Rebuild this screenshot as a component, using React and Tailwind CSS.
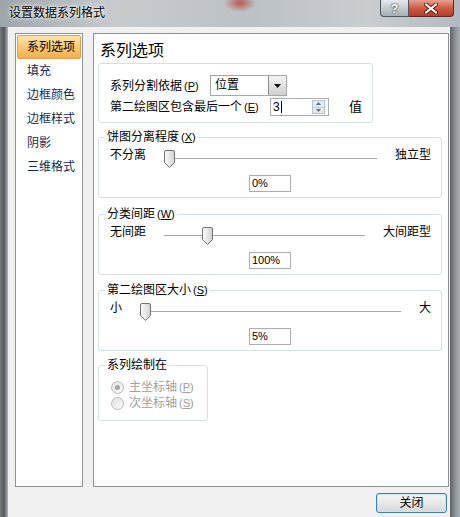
import React from 'react';

const navItems = ['系列选项', '填充', '边框颜色', '边框样式', '阴影', '三维格式'];

function Key({ k }) {
  return (
    <span className="ml-[2px] text-[11px]">
      (<span className="underline underline-offset-1">{k}</span>)
    </span>
  );
}

function Thumb() {
  return (
    <svg width="11" height="18" viewBox="0 0 11 18">
      <defs>
        <linearGradient id="thumbFill" x1="0" x2="1" y1="0" y2="0">
          <stop offset="0" stopColor="#fdfdfd" />
          <stop offset="1" stopColor="#d2d2d2" />
        </linearGradient>
      </defs>
      <path
        d="M2 0.5h7a1.5 1.5 0 0 1 1.5 1.5v10.5l-5 5l-5 -5v-10.5a1.5 1.5 0 0 1 1.5 -1.5z"
        fill="url(#thumbFill)"
        stroke="#727272"
      />
    </svg>
  );
}

function Slider({ pct }) {
  return (
    <div className="relative flex-1 self-stretch">
      <div className="absolute left-0 right-0 top-[13px] h-[2px] border-t border-b border-t-[#a8a8a8] border-b-white" />
      <div className="absolute top-[5px] leading-none" style={{ left: `calc(${pct} * (100% - 11px))` }}>
        <Thumb />
      </div>
    </div>
  );
}

function ValueBox({ value }) {
  return (
    <div className="mx-auto mt-[10px] flex h-[17px] w-[42px] items-center border border-[#abadb3] bg-white pl-[2px] text-[11px] leading-none">
      {value}
    </div>
  );
}

function SliderGroup({ title, left, right, pct, value, className }) {
  return (
    <fieldset className={`rounded-[3px] border border-[#d5dfe5] px-[10px] pb-[5px] ${className}`}>
      <legend className="ml-[-4px] px-[2px] leading-[16px]">{title}</legend>
      <div className="flex h-[20px] items-start gap-[18px] pl-[1px]">
        <span className="leading-[20px]">{left}</span>
        <Slider pct={pct} />
        <span className="leading-[20px]">{right}</span>
      </div>
      <ValueBox value={value} />
    </fieldset>
  );
}

function Radio({ checked, label, k }) {
  return (
    <div className="flex h-[16px] items-center gap-[5px] text-[#a0a0a0]">
      <span className="flex h-[13px] w-[13px] items-center justify-center rounded-full border border-[#bcbcbc] bg-gradient-to-br from-[#e2e2e2] to-[#fafafa]">
        {checked && <span className="h-[5px] w-[5px] rounded-full bg-[#a4a4a4]" />}
      </span>
      <span className="leading-[16px]">
        {label}
        <Key k={k} />
      </span>
    </div>
  );
}

export default function App() {
  return (
    <div className="flex h-[517px] w-[460px] flex-col overflow-hidden bg-[#a3a9ae] font-[family-name:'Liberation_Sans','Noto_Sans_CJK_SC',sans-serif] text-[12px] text-black">
      {/* title bar */}
      <div className="flex h-[27px] shrink-0 items-start bg-[radial-gradient(ellipse_16px_9px_at_240px_3px,#b65a52,transparent),linear-gradient(to_right,#9da4aa,#c7cbce_25%,#bcc1c5_55%,#c9cdd0_80%,#b3b9be)]">
        <span className="ml-[9px] mt-[5px] leading-[16px] [text-shadow:0_0_6px_#fff,0_0_3px_#fff]">设置数据系列格式</span>
        <div className="flex-1" />
        <div className="mr-[6px] flex h-[17px]">
          <div className="flex w-[29px] items-center justify-center rounded-bl-[4px] border border-t-0 border-[#4f565c] bg-gradient-to-b from-[#e6e9ec] to-[#a7aeb4] text-[13px] font-bold leading-none text-white [text-shadow:0_0_2px_#333,0_0_1px_#333]">
            ?
          </div>
          <div className="flex w-[45px] items-center justify-center rounded-br-[4px] border border-l-0 border-t-0 border-[#5a2a22] bg-gradient-to-b from-[#e6a291] via-[#cc5a43] to-[#b93a24]">
            <svg width="14" height="11" viewBox="0 0 14 11">
              <path d="M2 1.5l10 8M12 1.5l-10 8" stroke="#5b1e14" strokeWidth="4" strokeLinecap="round" />
              <path d="M2 1.5l10 8M12 1.5l-10 8" stroke="#fff" strokeWidth="2.2" strokeLinecap="round" />
            </svg>
          </div>
        </div>
      </div>

      {/* body */}
      <div className="flex flex-1">
        <div className="w-[8px] bg-gradient-to-r from-[#777b7f] via-[#55595d] to-[#b4b8bc]" />
        <div className="flex flex-1 flex-col bg-[#f0f0f0] pl-[7px] pr-[1px] pt-[6px]">
          <div className="flex h-[454px] gap-[10px]">
            {/* nav */}
            <div className="w-[68px] border border-[#8f9194] bg-white pt-[1px]">
              {navItems.map((item, i) => (
                <div
                  key={item}
                  className={
                    i === 0
                      ? 'mx-[1px] flex h-[24px] items-center rounded-[2px] border border-[#dca24c] bg-gradient-to-b from-[#fde3ad] via-[#f9c878] to-[#f3ad4e] pl-[9px] text-black'
                      : 'mx-[1px] flex h-[24px] items-center pl-[10px] text-[#14294b]'
                  }
                >
                  {item}
                </div>
              ))}
            </div>

            {/* options panel */}
            <div className="flex flex-1 flex-col border border-[#8f9194] bg-white pl-[4px] pr-[6px] pt-[7px]">
              <div className="ml-[2px] text-[16px] leading-[20px]">系列选项</div>

              <div className="mt-[2px] w-[275px] rounded-[3px] border border-[#d5dfe5] pb-[6px] pl-[11px] pt-[11px]">
                <div className="flex h-[21px] items-center">
                  <span className="w-[100px]">
                    系列分割依据
                    <Key k="P" />
                  </span>
                  <div className="flex h-[21px] w-[77px] border border-[#a5a7ab] bg-white">
                    <span className="flex-1 pl-[4px] leading-[19px]">位置</span>
                    <div className="flex w-[18px] items-center justify-center border-l border-[#8e9094] bg-gradient-to-b from-[#f4f4f4] to-[#cfcfcf]">
                      <svg width="7" height="4" viewBox="0 0 7 4">
                        <path d="M0 0h7l-3.5 4z" fill="#000" />
                      </svg>
                    </div>
                  </div>
                </div>
                <div className="mt-[2px] flex h-[18px] items-center">
                  <span className="w-[160px]">
                    第二绘图区包含最后一个
                    <Key k="E" />
                  </span>
                  <div className="flex h-[18px] w-[59px] items-center border border-[#abadb3] bg-white pl-[2px] pr-[3px]">
                    <span className="leading-none">3</span>
                    <span className="ml-[1px] h-[12px] w-px bg-black" />
                    <div className="flex-1" />
                    <div className="flex h-[14px] w-[13px] flex-col border border-[#b6c2cd] bg-[#e4eaef]">
                      <div className="flex flex-1 items-center justify-center border-b border-[#c5cfd8]">
                        <svg width="5" height="3" viewBox="0 0 5 3">
                          <path d="M0 3h5l-2.5-3z" fill="#5a6f8e" />
                        </svg>
                      </div>
                      <div className="flex flex-1 items-center justify-center">
                        <svg width="5" height="3" viewBox="0 0 5 3">
                          <path d="M0 0h5l-2.5 3z" fill="#5a6f8e" />
                        </svg>
                      </div>
                    </div>
                  </div>
                  <span className="ml-[20px] text-[13px]">值</span>
                </div>
              </div>

              <SliderGroup
                className="mt-[6px]"
                title={<>饼图分离程度<Key k="X" /></>}
                left="不分离"
                right="独立型"
                pct={0}
                value="0%"
              />
              <SliderGroup
                className="mt-[8px]"
                title={<>分类间距<Key k="W" /></>}
                left="无间距"
                right="大间距型"
                pct={0.2}
                value="100%"
              />
              <SliderGroup
                className="mt-[7px]"
                title={<>第二绘图区大小<Key k="S" /></>}
                left="小"
                right="大"
                pct={0}
                value="5%"
              />

              <fieldset className="mt-[6px] w-[110px] rounded-[3px] border border-[#d5dfe5] px-[10px] pb-[9px]">
                <legend className="ml-[-4px] px-[2px] leading-[16px]">系列绘制在</legend>
                <div className="ml-[2px] mt-[6px]">
                  <Radio checked label="主坐标轴" k="P" />
                  <Radio label="次坐标轴" k="S" />
                </div>
              </fieldset>
            </div>
          </div>

          <div className="flex justify-end pr-[2px] pt-[6px]">
            <button className="h-[20px] w-[71px] rounded-[3px] border border-[#3c7fb1] bg-gradient-to-b from-[#f6f6f6] via-[#e8e8e8] to-[#d6d6d6] text-[12px] leading-none shadow-[inset_0_0_0_1px_#c4e5f6]">
              关闭
            </button>
          </div>
        </div>
        <div className="w-[10px] bg-gradient-to-r from-[#5c6165] via-[#8b9094] to-[#a9aeb2]" />
      </div>
    </div>
  );
}
